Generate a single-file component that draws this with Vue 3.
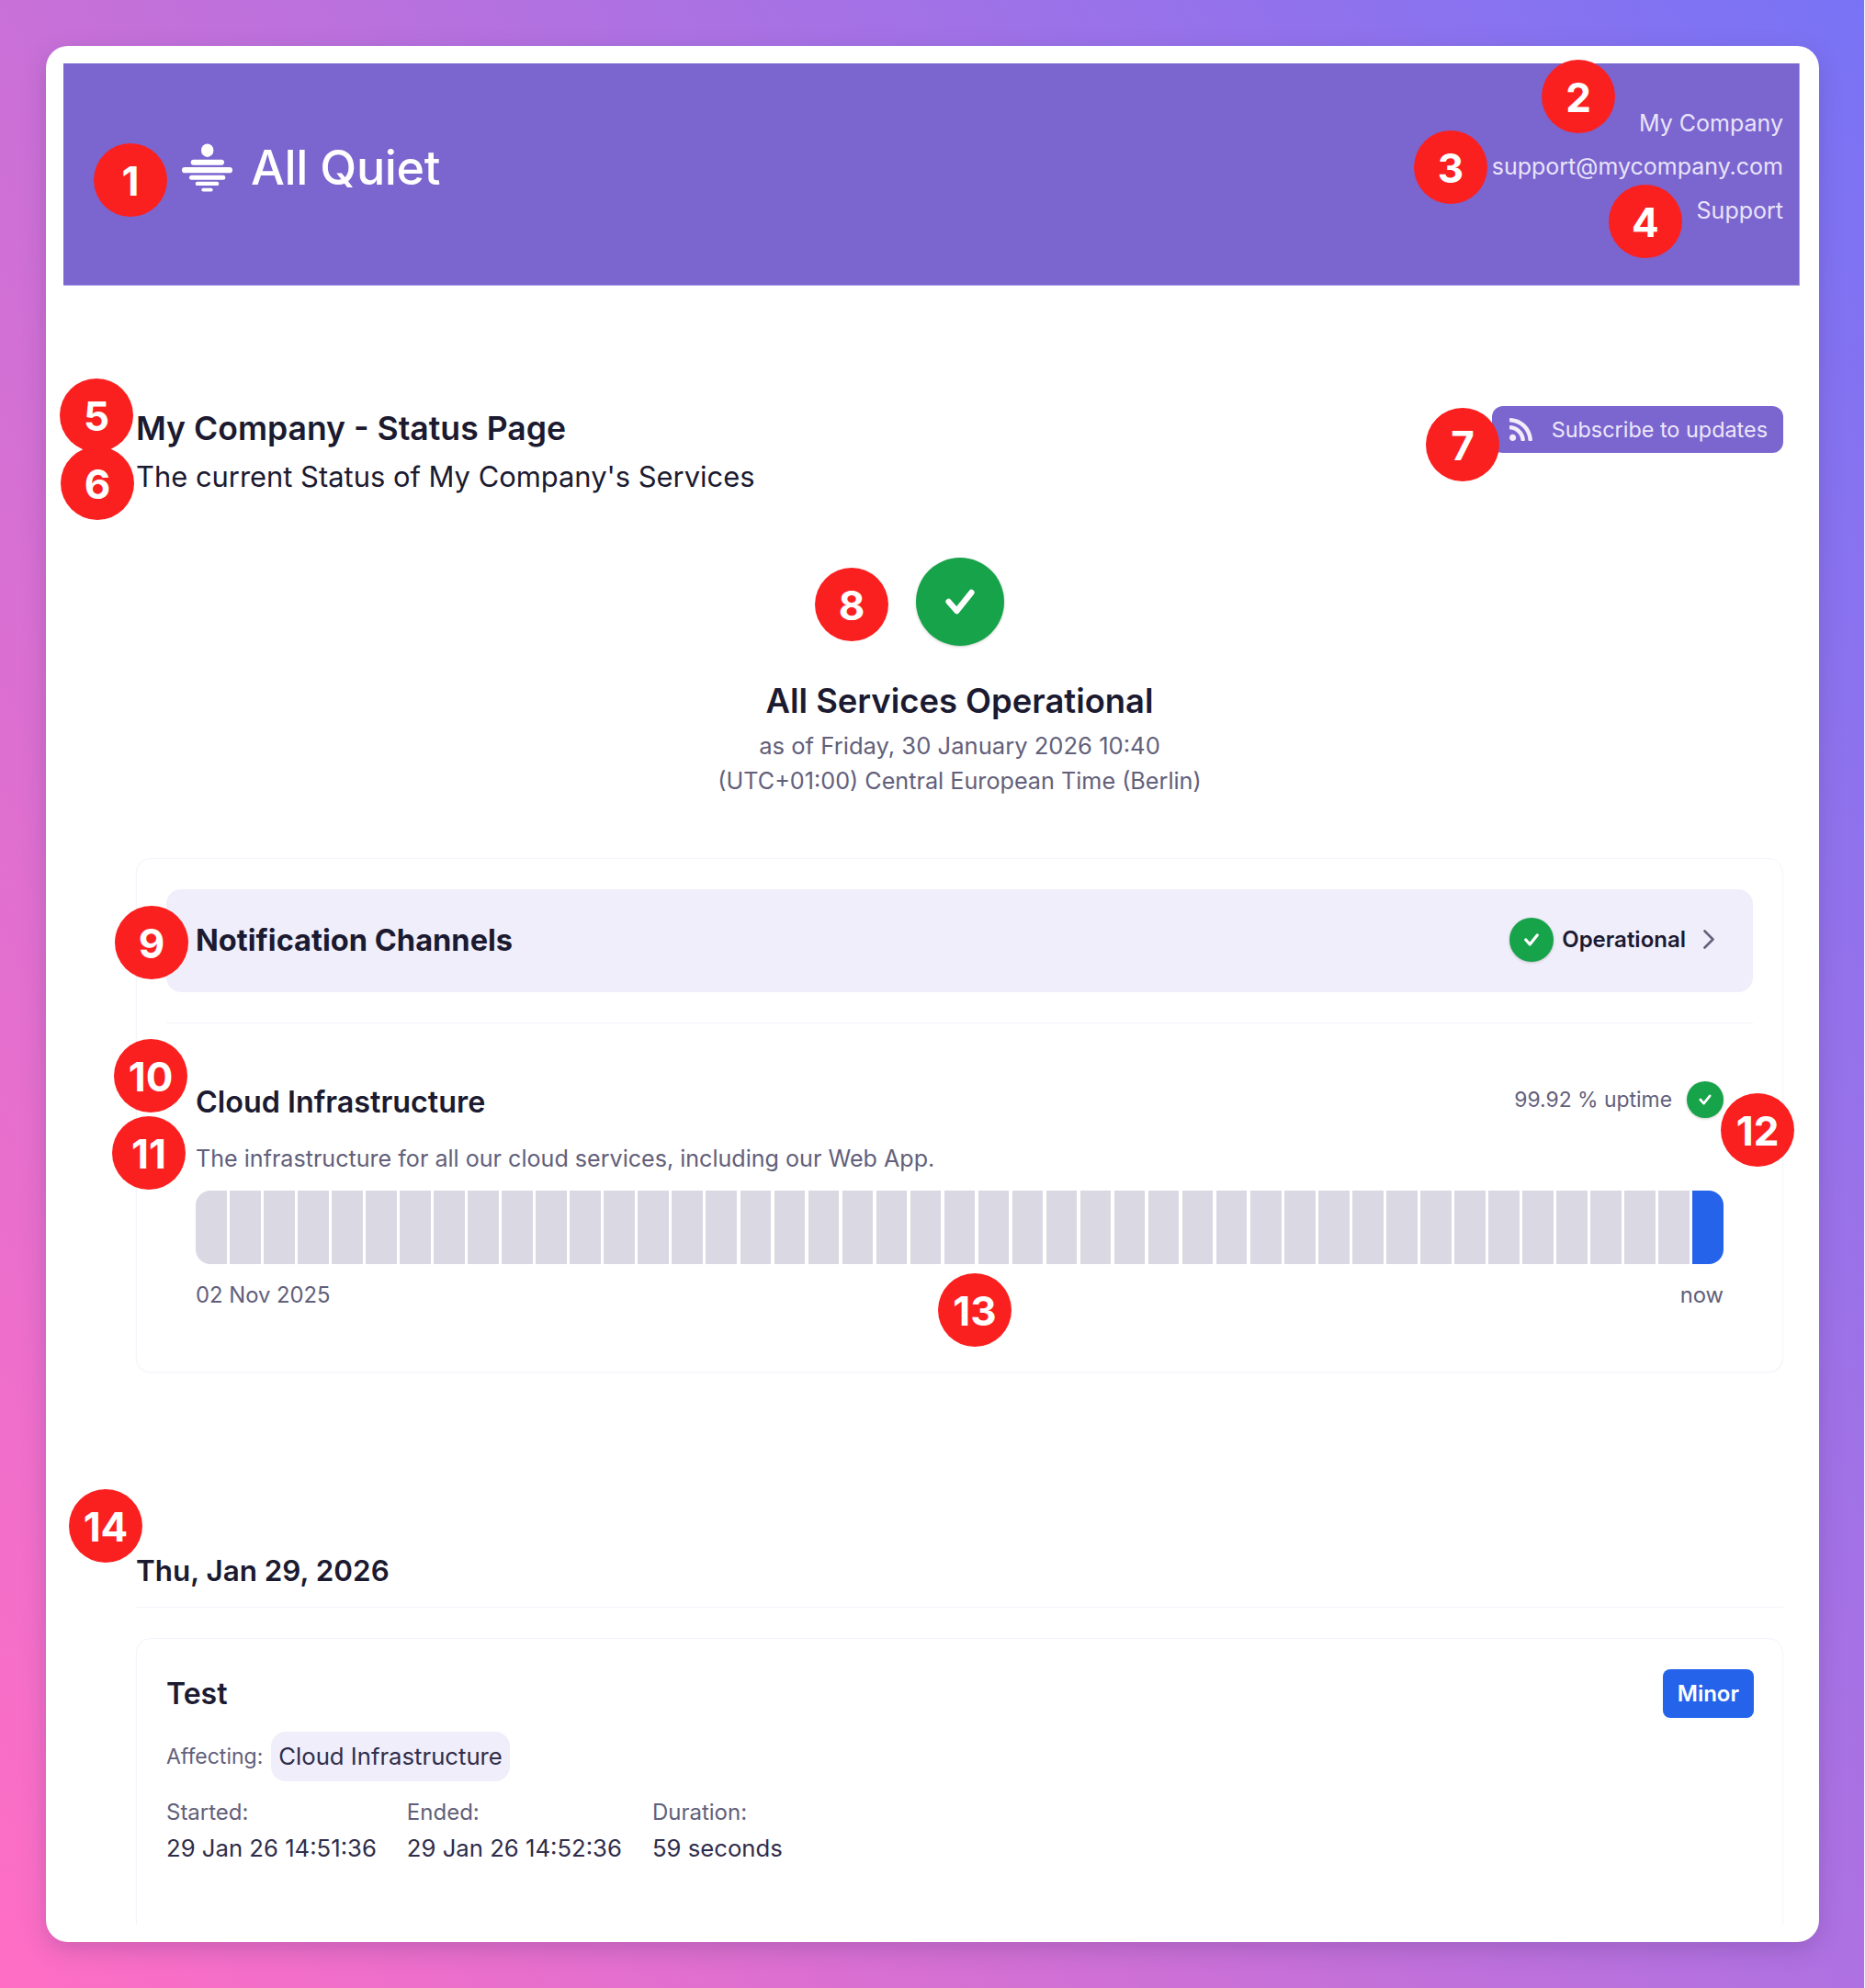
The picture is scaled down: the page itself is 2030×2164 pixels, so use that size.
<script setup>
const segments = Array.from({ length: 45 }, (_, i) => i)
const badges = [
  { n: 1, x: 102, y: 156 }, { n: 2, x: 1678, y: 65 }, { n: 3, x: 1539, y: 142 },
  { n: 4, x: 1751, y: 201 }, { n: 5, x: 65, y: 412 }, { n: 6, x: 66, y: 486 },
  { n: 7, x: 1552, y: 444 }, { n: 8, x: 887, y: 618 }, { n: 9, x: 125, y: 986 },
  { n: 10, x: 124, y: 1131 }, { n: 11, x: 122, y: 1215 }, { n: 12, x: 1873, y: 1190 },
  { n: 13, x: 1021, y: 1386 }, { n: 14, x: 75, y: 1621 }
]
</script>

<template>
  <div class="page">
    <div class="window">
      <div class="scroller">
        <header class="brand-bar">
          <div class="logo">
            <svg class="logo-mark" viewBox="0 0 55 53" fill="#fff">
              <ellipse cx="27.7" cy="7.7" rx="6.7" ry="7.3" />
              <rect x="9.7" y="17.7" width="36.3" height="6" rx="3" />
              <rect x="0" y="26" width="55" height="6.3" rx="3.1" />
              <rect x="8" y="34.7" width="39.3" height="5" rx="2.5" />
              <rect x="14.7" y="41.7" width="25.6" height="4.4" rx="2.2" />
              <rect x="21.3" y="48.7" width="12.4" height="3.8" rx="1.9" />
            </svg>
            <span class="logo-text">All Quiet</span>
          </div>
          <nav class="brand-links">
            <span>My Company</span>
            <span>support@mycompany.com</span>
            <span>Support</span>
          </nav>
        </header>

        <main class="content">
          <section class="intro">
            <div>
              <h1>My Company - Status Page</h1>
              <p class="subtitle">The current Status of My Company's Services</p>
            </div>
            <button class="subscribe">
              <svg class="rss" viewBox="0 32 448 448" fill="#f1edfb">
                <path d="M128.081 415.959c0 35.369-28.672 64.041-64.041 64.041S0 451.328 0 415.959s28.672-64.041 64.041-64.041 64.04 28.673 64.04 64.041zm175.66 47.25c-8.354-154.6-132.185-278.587-286.95-286.95C7.656 175.765 0 183.105 0 192.253v48.069c0 8.415 6.49 15.472 14.887 16.018 111.832 7.284 201.473 96.702 208.772 208.772.547 8.397 7.604 14.887 16.018 14.887h48.069c9.149.001 16.489-7.655 15.995-16.79zm144.249.288C439.596 229.677 251.465 40.445 16.503 32.01 7.473 31.686 0 38.981 0 48.016v48.068c0 8.625 6.835 15.645 15.453 15.999 191.179 7.839 344.627 161.316 352.465 352.465.353 8.618 7.373 15.453 15.999 15.453h48.068c9.034-.001 16.329-7.474 16.005-16.504z" />
              </svg>
              <span>Subscribe to updates</span>
            </button>
          </section>

          <section class="overall">
            <span class="check check-xl">
              <svg viewBox="0 0 24 24"><path d="M8.9 12l2.2 2.5 4-5" /></svg>
            </span>
            <h2>All Services Operational</h2>
            <p>as of Friday, 30 January 2026 10:40</p>
            <p class="tz">(UTC+01:00) Central European Time (Berlin)</p>
          </section>

          <section class="services card">
            <div class="group-row">
              <span class="group-name">Notification Channels</span>
              <div class="group-state">
                <span class="check check-md">
                  <svg viewBox="0 0 24 24"><path d="M8.9 12l2.2 2.5 4-5" /></svg>
                </span>
                <span class="state-text">Operational</span>
                <svg class="chevron" viewBox="0 0 12 21" fill="none">
                  <path d="M1.5 1.5l9 9-9 9" />
                </svg>
              </div>
            </div>
            <div class="service">
              <div class="service-head">
                <h3>Cloud Infrastructure</h3>
                <div class="uptime">
                  <span>99.92 % uptime</span>
                  <span class="check check-sm">
                    <svg viewBox="0 0 24 24"><path d="M8.9 12l2.2 2.5 4-5" /></svg>
                  </span>
                </div>
              </div>
              <p class="service-desc">The infrastructure for all our cloud services, including our Web App.</p>
              <div class="bars">
                <span
                  v-for="i in segments"
                  :key="i"
                  class="bar"
                  :class="{ 'bar-now': i === segments.length - 1 }"
                />
              </div>
              <div class="bar-labels">
                <span>02 Nov 2025</span>
                <span>now</span>
              </div>
            </div>
          </section>

          <section class="history">
            <h4>Thu, Jan 29, 2026</h4>
            <article class="incident card">
              <div class="incident-head">
                <h5>Test</h5>
                <span class="severity">Minor</span>
              </div>
              <div class="affecting">
                <span class="label label-sm">Affecting:</span>
                <span class="chip">Cloud Infrastructure</span>
              </div>
              <div class="times">
                <div>
                  <div class="label">Started:</div>
                  <div class="value">29 Jan 26 14:51:36</div>
                </div>
                <div>
                  <div class="label">Ended:</div>
                  <div class="value">29 Jan 26 14:52:36</div>
                </div>
                <div>
                  <div class="label">Duration:</div>
                  <div class="value">59 seconds</div>
                </div>
              </div>
            </article>
          </section>
        </main>
      </div>
    </div>

    <span
      v-for="b in badges"
      :key="b.n"
      class="badge"
      :style="{ left: b.x + 'px', top: b.y + 'px' }"
    >{{ b.n }}</span>
  </div>
</template>

<style>
html, body { margin: 0; background: #f4f1ff; }
body { overflow: hidden; }
</style>

<style scoped>
* { box-sizing: border-box; }
.page {
  position: relative;
  width: 2029px;
  height: 2164px;
  padding: 50px 49px 50px 50px;
  background: linear-gradient(58deg, #ff6ec4, #7873f5);
  font-family: Inter, "Liberation Sans", sans-serif;
  color: #1b1a30;
}
.window {
  height: 2064px;
  padding: 19px 21px 19px 19px;
  background: #fff;
  border-radius: 24px;
  box-shadow: 0 8px 24px rgba(80, 50, 120, 0.25);
}
.scroller { height: 2026px; overflow: hidden; }
h1, h2, h3, h4, h5, p { margin: 0; }

.brand-bar {
  display: flex;
  justify-content: space-between;
  align-items: center;
  height: 242px;
  padding: 0 17px 0 129px;
  background: #7b65cf;
  border-right: 1px solid #a99ce6;
  border-bottom: 1px solid #a99ce6;
}
.logo { display: flex; align-items: center; gap: 20px; margin-top: -14px; }
.logo-mark { width: 55px; height: 53px; }
.logo-text { font-size: 52px; line-height: 60px; color: #fff; font-weight: 450; letter-spacing: -0.4px; }
.brand-links {
  display: flex;
  flex-direction: column;
  align-items: flex-end;
  margin-top: -15px;
  font-size: 25px;
  line-height: 47.5px;
  color: #e9e4fa;
}

.content { padding: 0 18px 0 79px; }
.intro { display: flex; justify-content: space-between; align-items: flex-start; padding-top: 131px; }
h1 { margin-top: 1.4px; font-size: 35.6px; line-height: 48px; font-weight: 600; }
.subtitle { margin-top: 3.2px; font-size: 30.9px; line-height: 48px; font-weight: 400; }
.subscribe {
  display: flex;
  align-items: center;
  gap: 21px;
  height: 51px;
  padding: 0 17px 0 19px;
  border: 0;
  border-radius: 12px;
  background: #7b65cf;
  color: #ece8fa;
  font-family: inherit;
  font-size: 23.4px;
}
.rss { width: 25px; height: 25px; }

.overall { display: flex; flex-direction: column; align-items: center; margin-top: 64.4px; }
.overall h2 { margin-top: 36px; font-size: 36.4px; line-height: 48px; font-weight: 600; }
.overall h2 + p { margin-top: 6.5px; }
.overall p { font-size: 25.6px; line-height: 38px; color: #62607a; }
.overall p.tz { font-size: 25.2px; }

.check {
  display: inline-flex;
  flex: none;
  border-radius: 50%;
  background: #16a34a;
  box-shadow: 0 1px 3px rgba(0, 0, 0, 0.2);
}
.check svg { width: 100%; height: 100%; fill: none; stroke: #fff; stroke-width: 1.6; stroke-linecap: round; stroke-linejoin: round; }
.check-xl { width: 96px; height: 96px; }
.check-md { width: 48px; height: 48px; }
.check-sm { width: 40px; height: 40px; }

.card { border: 1px solid #f4f3fb; border-radius: 16px; box-shadow: 0 1px 2px rgba(40, 30, 90, 0.03); }
.services { margin-top: 64.5px; padding: 33px 32px 66px; }
.group-row {
  display: flex;
  justify-content: space-between;
  align-items: center;
  height: 112px;
  padding: 0 42px 0 32px;
  background: #f0eefa;
  border-radius: 16px;
}
.group-name { margin-top: -2px; font-size: 32.6px; font-weight: 700; }
.group-state { display: flex; align-items: center; margin-top: -2px; }
.state-text { margin-left: 9px; font-size: 24px; font-weight: 600; }
.chevron { width: 12px; height: 21px; margin-left: 19px; }
.chevron path { stroke: #62607a; stroke-width: 2.6; stroke-linecap: round; stroke-linejoin: round; }

.service { margin-top: 33px; padding: 63px 32px 0; border-top: 1px solid #f4f3fb; }
.service-head { display: flex; justify-content: space-between; align-items: flex-start; height: 46px; }
h3 { font-size: 32.3px; line-height: 46px; font-weight: 600; }
.uptime { display: flex; align-items: center; gap: 16px; font-size: 22.9px; color: #62607a; }
.service-desc { margin-top: 18px; font-size: 25.1px; line-height: 40px; color: #62607a; }
.bars { display: flex; gap: 3.5px; margin-top: 15px; height: 80px; border-radius: 16px; overflow: hidden; }
.bar { flex: 1; background: #dad8e3; }
.bar-now { background: #2563eb; }
.bar-labels {
  display: flex;
  justify-content: space-between;
  margin-top: 17px;
  font-size: 23.8px;
  line-height: 34px;
  color: #62607a;
}

.history { margin-top: 194px; }
h4 { padding-bottom: 17px; border-bottom: 1px solid #f4f3fb; font-size: 31.4px; line-height: 44px; font-weight: 600; }
.incident { margin-top: 33px; height: 400px; padding: 33px 31px 0 32px; }
.incident-head { display: flex; justify-content: space-between; align-items: center; }
h5 { font-size: 32px; font-weight: 600; }
.severity {
  display: flex;
  align-items: center;
  height: 53px;
  padding: 0 16px;
  border-radius: 8px;
  background: #2563eb;
  color: #fff;
  font-size: 24px;
  font-weight: 600;
}
.affecting { display: flex; align-items: center; gap: 9px; margin-top: 15px; }
.label { font-size: 24px; line-height: 34px; color: #62607a; }
.label-sm { font-size: 23px; }
.chip {
  display: flex;
  align-items: center;
  height: 54px;
  padding: 0 8px;
  border-radius: 16px;
  background: #f0eefa;
  font-size: 25.7px;
  color: #2f2d4a;
}
.times { display: flex; gap: 33px; margin-top: 17px; }
.value { margin-top: 3px; font-size: 25.7px; line-height: 38px; color: #2f2d4a; }

.badge {
  position: absolute;
  display: flex;
  align-items: center;
  justify-content: center;
  width: 80px;
  height: 80px;
  padding-top: 1px;
  border-radius: 50%;
  background: #fb2020;
  color: #fff;
  font-size: 44px;
  font-weight: 700;
}
</style>
